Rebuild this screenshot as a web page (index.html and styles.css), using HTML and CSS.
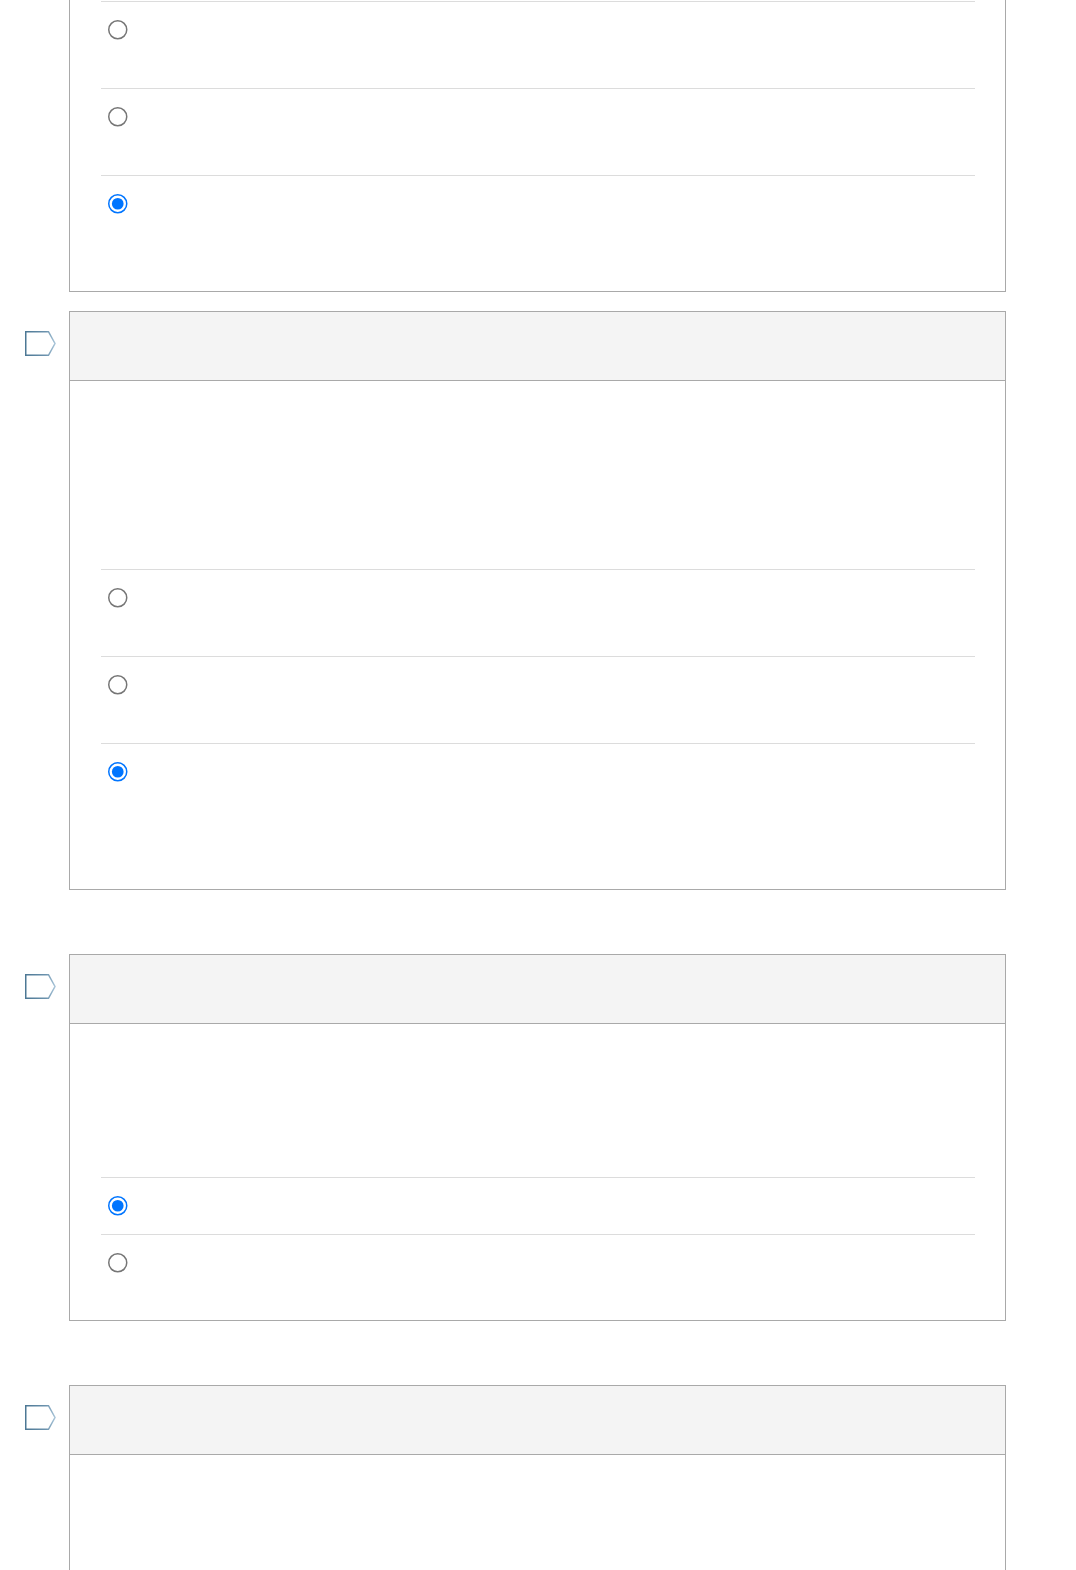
FILE: index.html
```html
<!DOCTYPE html>
<html lang="en">
<head>
    <meta charset="UTF-8">
    <meta name="viewport" content="width=device-width, initial-scale=1.0">
    <title>Quiz</title>
    <link rel="stylesheet" href="styles.css">
</head>
<body>
    <div class="quiz">
        <!-- question continued from above the fold -->
        <div class="question first">
            <div class="flag-col"></div>
            <div class="card cut">
                <div class="card-body">
                    <div class="answers">
                        <label class="answer tall"><input type="radio" name="q1"></label>
                        <label class="answer tall"><input type="radio" name="q1"></label>
                        <label class="answer tall"><input type="radio" name="q1" checked></label>
                    </div>
                </div>
            </div>
        </div>

        <div class="question near">
            <div class="flag-col">
                <svg class="flag" width="31" height="25" viewBox="0 0 31 25">
                    <defs>
                        <linearGradient id="flagLine1" x1="0" y1="0" x2="1" y2="0">
                            <stop offset="0" stop-color="#4d7895"/>
                            <stop offset="0.7" stop-color="#6c93ae"/>
                            <stop offset="1" stop-color="#a9c5d9"/>
                        </linearGradient>
                    </defs>
                    <path d="M0.75 0.75 H23.5 L30 12.5 L23.5 24.25 H0.75 Z" fill="#fff" stroke="url(#flagLine1)" stroke-width="1.5"/>
                </svg>
            </div>
            <div class="card">
                <div class="card-head"></div>
                <div class="card-body">
                    <div class="stem big"></div>
                    <div class="answers roomy">
                        <label class="answer tall"><input type="radio" name="q2"></label>
                        <label class="answer tall"><input type="radio" name="q2"></label>
                        <label class="answer tall"><input type="radio" name="q2" checked></label>
                    </div>
                </div>
            </div>
        </div>

        <div class="question">
            <div class="flag-col">
                <svg class="flag" width="31" height="25" viewBox="0 0 31 25">
                    <defs>
                        <linearGradient id="flagLine2" x1="0" y1="0" x2="1" y2="0">
                            <stop offset="0" stop-color="#4d7895"/>
                            <stop offset="0.7" stop-color="#6c93ae"/>
                            <stop offset="1" stop-color="#a9c5d9"/>
                        </linearGradient>
                    </defs>
                    <path d="M0.75 0.75 H23.5 L30 12.5 L23.5 24.25 H0.75 Z" fill="#fff" stroke="url(#flagLine2)" stroke-width="1.5"/>
                </svg>
            </div>
            <div class="card">
                <div class="card-head"></div>
                <div class="card-body">
                    <div class="stem"></div>
                    <div class="answers">
                        <label class="answer"><input type="radio" name="q3" checked></label>
                        <label class="answer"><input type="radio" name="q3"></label>
                    </div>
                </div>
            </div>
        </div>

        <div class="question">
            <div class="flag-col">
                <svg class="flag" width="31" height="25" viewBox="0 0 31 25">
                    <defs>
                        <linearGradient id="flagLine3" x1="0" y1="0" x2="1" y2="0">
                            <stop offset="0" stop-color="#4d7895"/>
                            <stop offset="0.7" stop-color="#6c93ae"/>
                            <stop offset="1" stop-color="#a9c5d9"/>
                        </linearGradient>
                    </defs>
                    <path d="M0.75 0.75 H23.5 L30 12.5 L23.5 24.25 H0.75 Z" fill="#fff" stroke="url(#flagLine3)" stroke-width="1.5"/>
                </svg>
            </div>
            <div class="card">
                <div class="card-head"></div>
                <div class="card-body">
                    <div class="stem long"></div>
                </div>
            </div>
        </div>
    </div>
</body>
</html>
```
FILE: styles.css
```css
body {
    font-family: "Liberation Sans", Arial, sans-serif;
    margin: 0;
    background-color: #fff;
    color: #333;
}
.quiz {
    padding: 0 0 0 25px;
}
.question {
    display: flex;
    align-items: flex-start;
    margin-top: 64px;
}
.question.first {
    margin-top: 0;
}
.question.near {
    margin-top: 19px;
}
.flag-col {
    width: 31px;
    margin-right: 13px;
    flex-shrink: 0;
}
.flag {
    display: block;
    margin-top: 20px;
}
.card {
    width: 935px;
    border: 1px solid #a9a9a9;
    background: #fff;
}
.card.cut {
    border-top: none;
    padding-top: 1px;
}
.card-head {
    height: 68px;
    background: #f4f4f4;
    border-bottom: 1px solid #a9a9a9;
}
.card-body {
    padding: 0 30px 0 31px;
}
.stem {
    height: 153px;
}
.stem.big {
    height: 188px;
}
.stem.long {
    height: 200px;
}
.answers {
    padding-bottom: 29px;
}
.answers.roomy {
    padding-bottom: 59px;
}
.answer {
    display: block;
    border-top: 1px solid #dcdcdc;
    padding: 18px 7px;
    height: 20px;
}
.answer.tall {
    padding-bottom: 48px;
}
.answer input {
    display: block;
    width: 13px;
    height: 13px;
    margin: 0;
    zoom: 1.5;
}
```
